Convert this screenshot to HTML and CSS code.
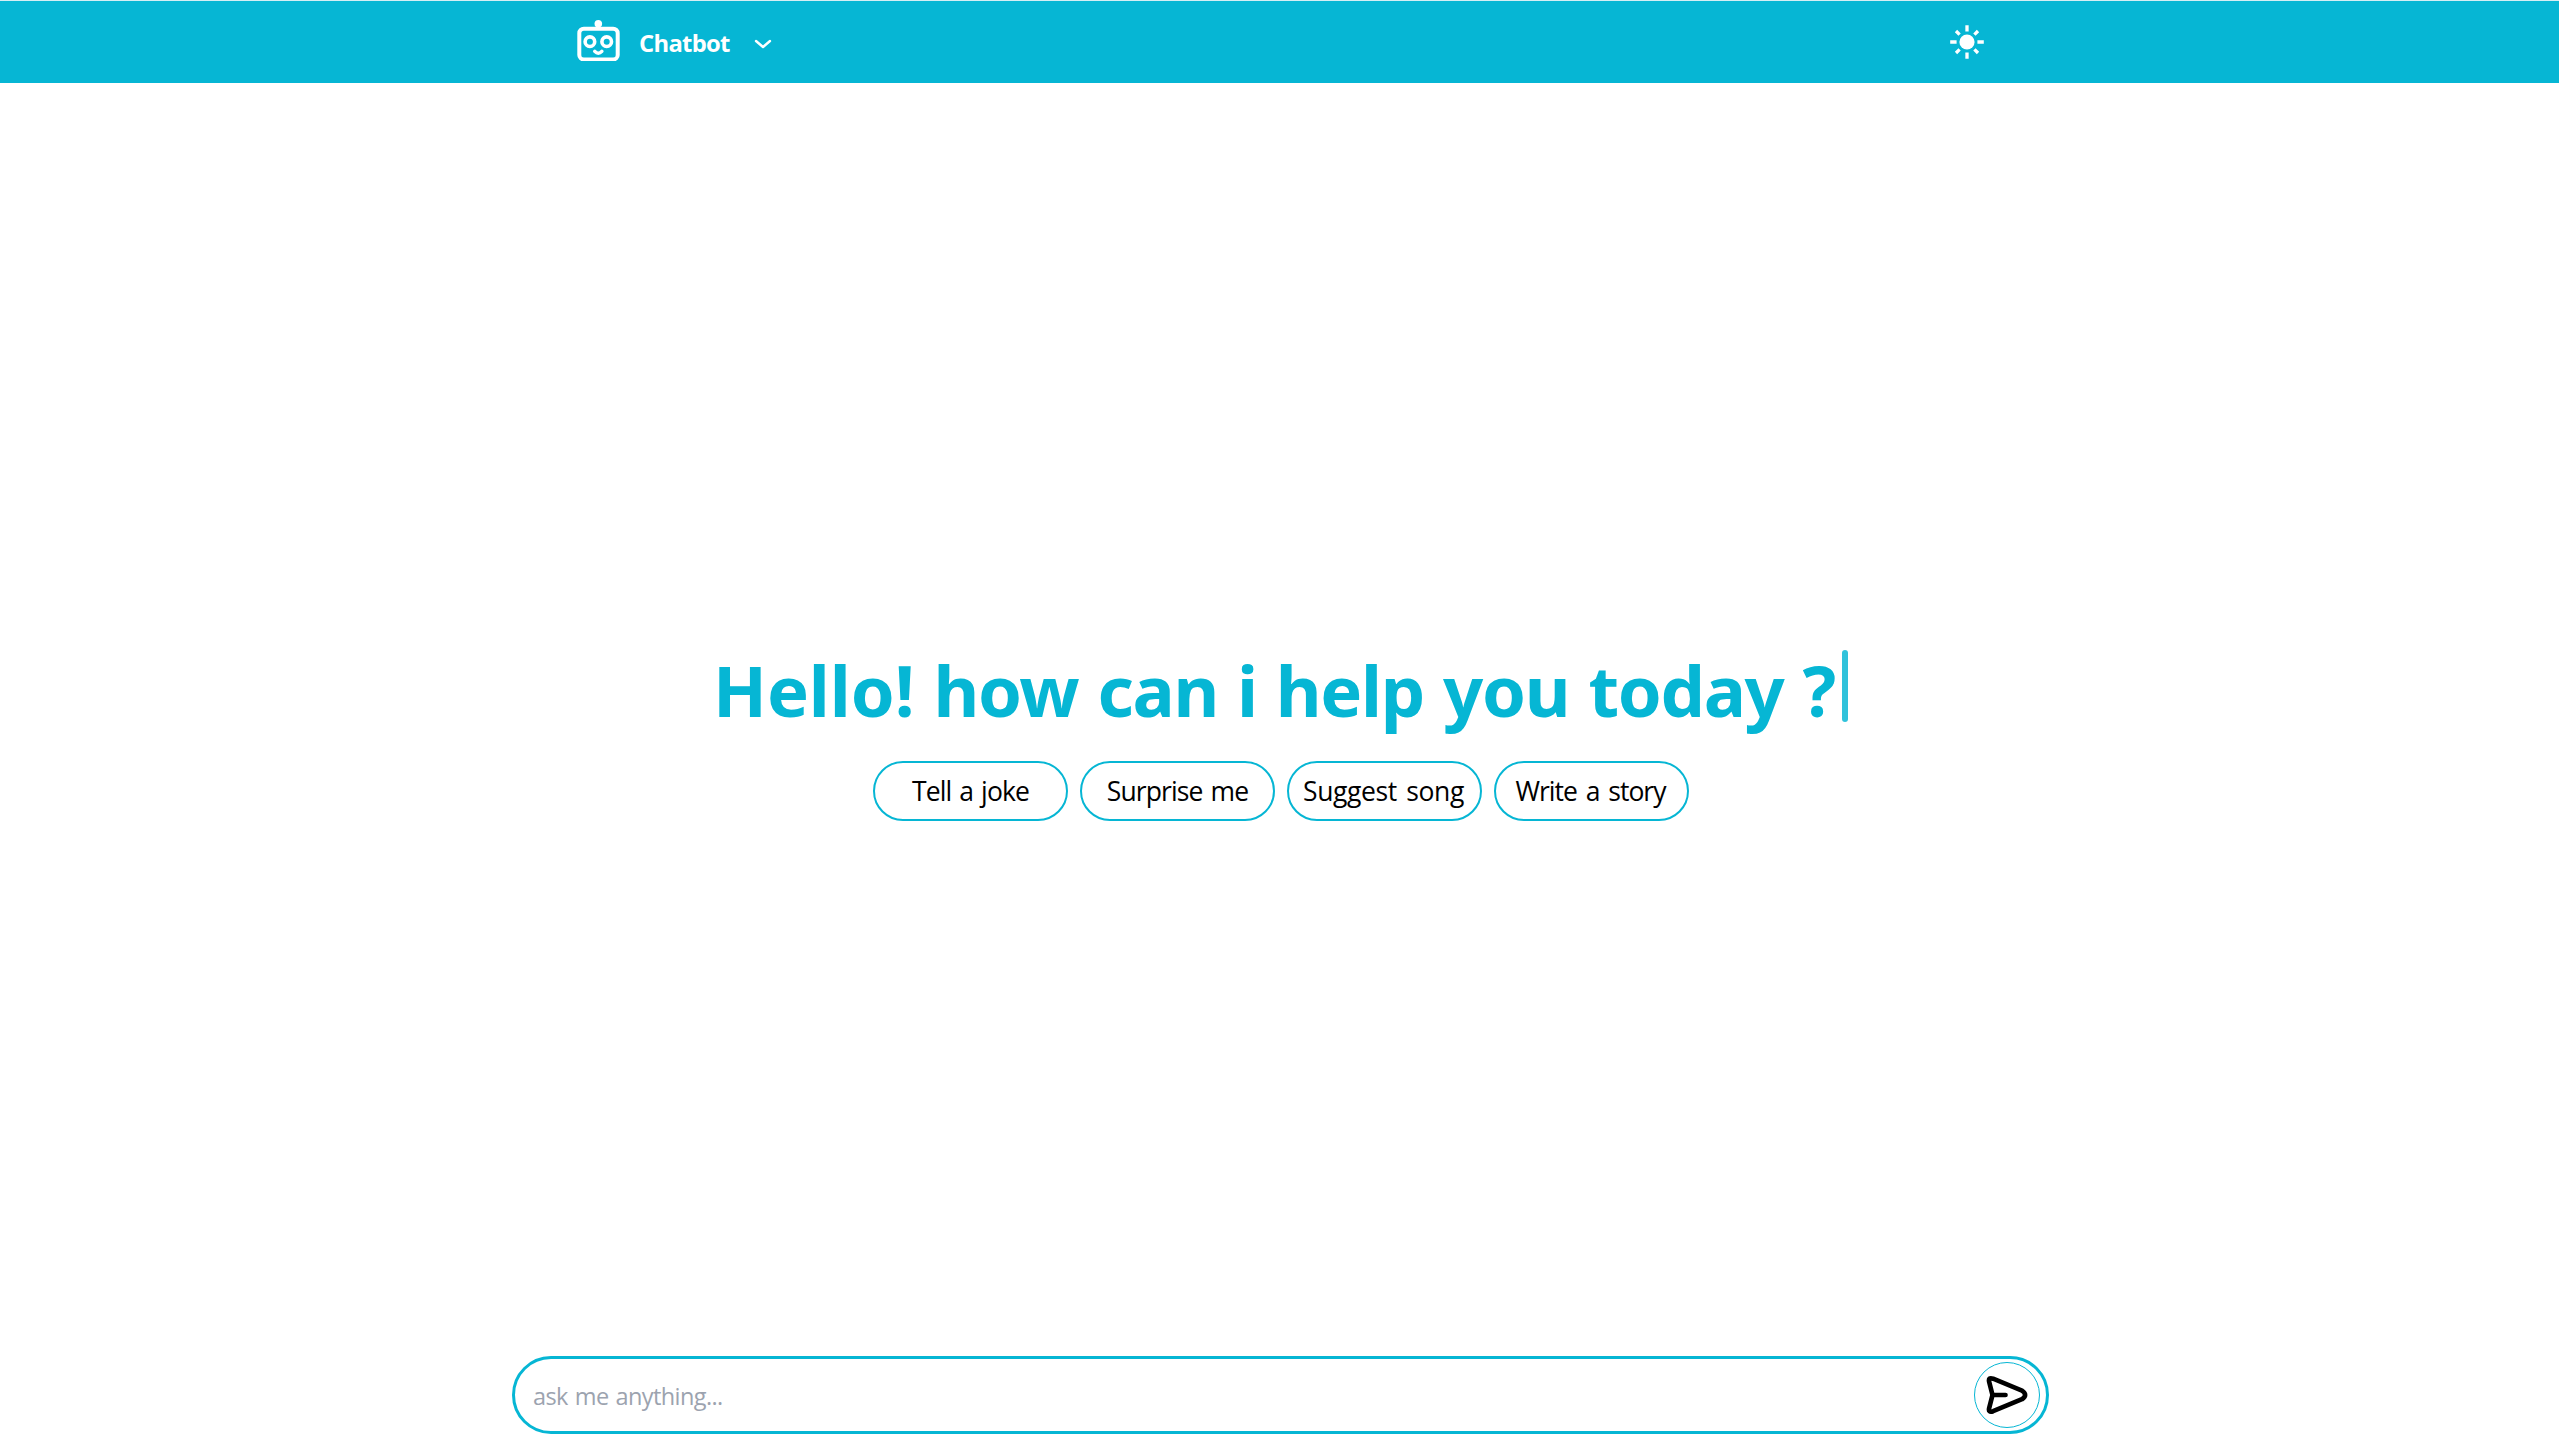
FILE: index.html
```html
<!DOCTYPE html>
<html lang="en">
<head>
<meta charset="utf-8">
<title>Chatbot</title>
<link rel="stylesheet" href="styles.css">
</head>
<body>
<header class="header">
  <div class="brand">
    <svg class="robot" viewBox="0 0 44 44">
      <rect x="3.3" y="11.7" width="38.4" height="30.8" rx="4.5" fill="none" stroke="currentColor" stroke-width="4"/>
      <circle cx="22.3" cy="6.8" r="3.8" fill="currentColor"/>
      <path d="M22.3 7v4" stroke="currentColor" stroke-width="3"/>
      <g fill="none" stroke="currentColor" stroke-width="3.6">
        <circle cx="13.9" cy="24.7" r="4.8"/>
        <circle cx="30.7" cy="24.7" r="4.8"/>
        <path d="M18.8 34.4q3.5 3.8 7 0" stroke-linecap="round"/>
      </g>
    </svg>
    <span class="brand-name">Chatbot</span>
    <svg class="chevron" viewBox="0 0 18 10"><path d="M2 2l7 6 7-6" fill="none" stroke="currentColor" stroke-width="2.4" stroke-linecap="round" stroke-linejoin="round"/></svg>
  </div>
  <svg class="sun" viewBox="-18 -18 36 36">
    <circle r="7.6" fill="currentColor"/>
    <path d="M0-16.8v6.4M0 10.4v6.4M-16.8 0h6.4M10.4 0h6.4M-11-11l3.6 3.6M11-11l-3.6 3.6M-11 11l3.6-3.6M11 11l-3.6-3.6" stroke="currentColor" stroke-width="3.3"/>
  </svg>
</header>
<main class="main">
  <h1 class="greeting"><span><span class="hello">Hello!</span> how can i help you today ?</span><span class="caret"></span></h1>
  <div class="prompts">
    <button class="prompt joke">Tell a joke</button>
    <button class="prompt surprise">Surprise me</button>
    <button class="prompt song">Suggest song</button>
    <button class="prompt story">Write a story</button>
  </div>
</main>
<form class="composer">
  <input class="field" type="text" placeholder="ask me anything...">
  <button class="send" type="button" aria-label="Send">
    <svg class="plane" viewBox="0 0 42 40"><path d="M6.5 20L3.2 7Q2 1.9 7.1 3.7L36 15.6Q42.2 20 36 24.2L7.1 36.2Q2 38 3.2 33Z M6.5 20H19.5" fill="none" stroke="currentColor" stroke-width="4.7" stroke-linecap="round" stroke-linejoin="round"/></svg>
  </button>
</form>
</body>
</html>
```
FILE: styles.css
```css
* { box-sizing: border-box; }
body {
  margin: 0;
  height: 1439px;
  display: flex;
  flex-direction: column;
  background: #fff;
  font-family: "Open Sans", "Noto Sans", sans-serif;
  overflow: hidden;
}
svg { display: block; flex: none; }
.header {
  height: 83px;
  margin-bottom: 567px;
  padding: 0 574px 0 576px;
  display: flex;
  align-items: center;
  justify-content: space-between;
  border-top: 1px solid #d5eef4;
  background: #06b6d4;
  color: #fff;
}
.brand { display: flex; align-items: center; }
.robot { width: 44px; height: 44px; margin: -6px 19px 0 0; }
.brand-name {
  width: 115px;
  padding-top: 2px;
  font-size: 23.8px;
  font-weight: 700;
  letter-spacing: -0.7px;
  line-height: 36px;
}
.chevron { width: 18px; height: 10px; margin-top: 3px; }
.sun { width: 36px; height: 36px; }
.main { display: flex; flex-direction: column; align-items: center; gap: 12px; }
.greeting {
  margin: 0;
  height: 99px;
  padding-left: 2px;
  display: flex;
  align-items: flex-start;
  color: #06b6d4;
  font-family: "Noto Sans", sans-serif;
  font-size: 70.5px;
  font-weight: 700;
  line-height: 80px;
  letter-spacing: -1.3px;
  word-spacing: 2px;
  white-space: nowrap;
}
.hello { letter-spacing: -0.1px; }
.caret {
  width: 6px;
  height: 72px;
  margin-left: 7px;
  border-radius: 3px;
  background: #06b6d4;
  opacity: 0.83;
}
.prompts { display: flex; gap: 12px; padding-left: 3px; }
.prompt {
  width: 195px;
  height: 60px;
  padding: 0;
  border: 2px solid #06b6d4;
  border-radius: 30px;
  background: #fff;
  color: #000;
  font: 400 26.5px "Open Sans", sans-serif;
  white-space: nowrap;
}
.joke { letter-spacing: -0.9px; word-spacing: 2px; }
.surprise { letter-spacing: -0.9px; word-spacing: 2px; }
.song { letter-spacing: -0.4px; word-spacing: 3px; padding-right: 2px; }
.story { letter-spacing: -1px; word-spacing: 3px; padding-right: 2px; }
.composer {
  width: 1537px;
  height: 78px;
  margin: auto 0 5px 512px;
  padding: 0 6px 0 18px;
  display: flex;
  align-items: center;
  border: 3px solid #06b6d4;
  border-radius: 39px;
}
.field {
  flex: 1;
  height: 60px;
  padding: 2px 0 0;
  border: 0;
  outline: 0;
  background: transparent;
  font: 400 23.5px "Open Sans", sans-serif;
  letter-spacing: -0.6px;
  word-spacing: 1.5px;
}
.field::placeholder { color: #9ca3af; opacity: 1; }
.send {
  width: 66px;
  height: 66px;
  padding: 0;
  display: flex;
  align-items: center;
  justify-content: center;
  border: 1px solid #06b6d4;
  border-radius: 50%;
  background: #fff;
  color: #000;
}
.plane { width: 42px; height: 40px; }
```
